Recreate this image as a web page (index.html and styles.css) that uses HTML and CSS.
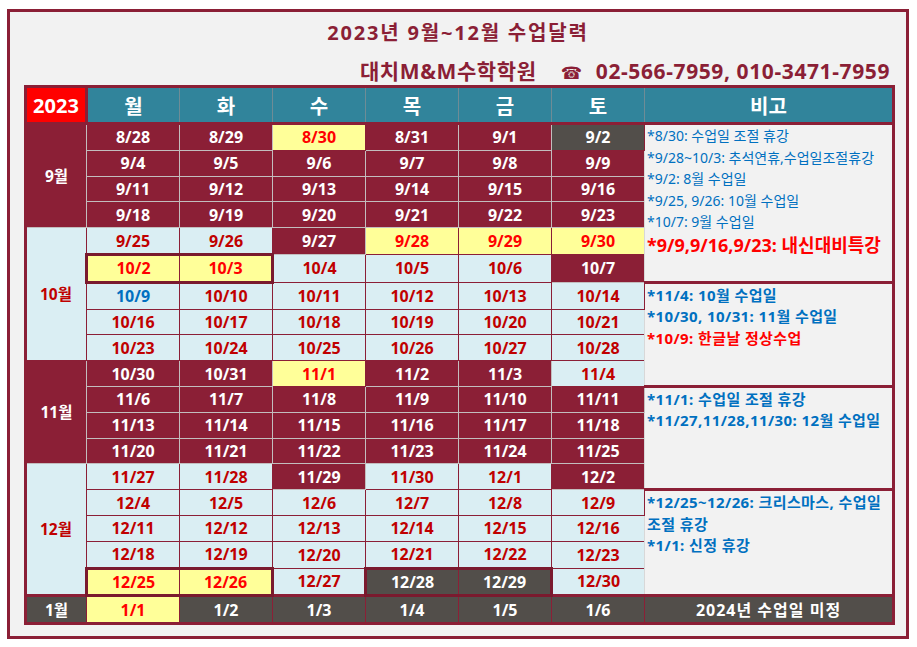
FILE: index.html
```html
<!DOCTYPE html>
<html lang="ko">
<head>
<meta charset="utf-8">
<title>2023년 9월~12월 수업달력</title>
<link rel="stylesheet" href="styles.css">
</head>
<body>
<div class="frame">
  <h1 class="title">2023년 9월~12월 수업달력</h1>
  <p class="contact"><span>대치M&amp;M수학학원</span><span class="phone">☎</span><span>02-566-7959, 010-3471-7959</span></p>
  <table class="cal">
    <colgroup>
      <col class="c-month"><col class="c-day"><col class="c-day"><col class="c-day"><col class="c-day"><col class="c-day"><col class="c-day"><col class="c-note">
    </colgroup>
    <thead>
      <tr class="head">
        <th class="year">2023</th><th>월</th><th>화</th><th>수</th><th>목</th><th>금</th><th>토</th><th>비고</th>
      </tr>
    </thead>
    <tbody>
      <tr>
        <td class="mon m" rowspan="4">9월</td>
        <td class="m">8/28</td><td class="m">8/29</td><td class="y">8/30</td><td class="m">8/31</td><td class="m">9/1</td><td class="g">9/2</td>
        <td class="note first" rowspan="6">
          <div class="ln">*8/30: 수업일 조절 휴강</div>
          <div class="ln">*9/28~10/3: 추석연휴,수업일조절휴강</div>
          <div class="ln">*9/2: 8월 수업일</div>
          <div class="ln">*9/25, 9/26: 10월 수업일</div>
          <div class="ln">*10/7: 9월 수업일</div>
          <div class="ln big">*9/9,9/16,9/23: 내신대비특강</div>
        </td>
      </tr>
      <tr><td class="m">9/4</td><td class="m">9/5</td><td class="m">9/6</td><td class="m">9/7</td><td class="m">9/8</td><td class="m">9/9</td></tr>
      <tr><td class="m">9/11</td><td class="m">9/12</td><td class="m">9/13</td><td class="m">9/14</td><td class="m">9/15</td><td class="m">9/16</td></tr>
      <tr><td class="m">9/18</td><td class="m">9/19</td><td class="m">9/20</td><td class="m">9/21</td><td class="m">9/22</td><td class="m">9/23</td></tr>
      <tr>
        <td class="mon b" rowspan="5">10월</td>
        <td class="b">9/25</td><td class="b">9/26</td><td class="m">9/27</td><td class="y">9/28</td><td class="y">9/29</td><td class="y">9/30</td>
      </tr>
      <tr><td class="y box-l">10/2</td><td class="y box-r">10/3</td><td class="b">10/4</td><td class="b">10/5</td><td class="b">10/6</td><td class="m">10/7</td></tr>
      <tr>
        <td class="b blue">10/9</td><td class="b">10/10</td><td class="b">10/11</td><td class="b">10/12</td><td class="b">10/13</td><td class="b">10/14</td>
        <td class="note bold" rowspan="4">
          <div class="ln">*11/4: 10월 수업일</div>
          <div class="ln">*10/30, 10/31: 11월 수업일</div>
          <div class="ln red">*10/9: 한글날 정상수업</div>
        </td>
      </tr>
      <tr><td class="b">10/16</td><td class="b">10/17</td><td class="b">10/18</td><td class="b">10/19</td><td class="b">10/20</td><td class="b">10/21</td></tr>
      <tr><td class="b">10/23</td><td class="b">10/24</td><td class="b">10/25</td><td class="b">10/26</td><td class="b">10/27</td><td class="b">10/28</td></tr>
      <tr>
        <td class="mon m" rowspan="4">11월</td>
        <td class="m">10/30</td><td class="m">10/31</td><td class="y">11/1</td><td class="m">11/2</td><td class="m">11/3</td><td class="b">11/4</td>
      </tr>
      <tr>
        <td class="m">11/6</td><td class="m">11/7</td><td class="m">11/8</td><td class="m">11/9</td><td class="m">11/10</td><td class="m">11/11</td>
        <td class="note bold" rowspan="4">
          <div class="ln">*11/1: 수업일 조절 휴강</div>
          <div class="ln">*11/27,11/28,11/30: 12월 수업일</div>
        </td>
      </tr>
      <tr><td class="m">11/13</td><td class="m">11/14</td><td class="m">11/15</td><td class="m">11/16</td><td class="m">11/17</td><td class="m">11/18</td></tr>
      <tr><td class="m">11/20</td><td class="m">11/21</td><td class="m">11/22</td><td class="m">11/23</td><td class="m">11/24</td><td class="m">11/25</td></tr>
      <tr>
        <td class="mon b" rowspan="5">12월</td>
        <td class="b">11/27</td><td class="b">11/28</td><td class="m">11/29</td><td class="b">11/30</td><td class="b">12/1</td><td class="m">12/2</td>
      </tr>
      <tr>
        <td class="b">12/4</td><td class="b">12/5</td><td class="b">12/6</td><td class="b">12/7</td><td class="b">12/8</td><td class="b">12/9</td>
        <td class="note bold" rowspan="4">
          <div class="ln">*12/25~12/26: 크리스마스, 수업일<br>조절 휴강</div>
          <div class="ln">*1/1: 신정 휴강</div>
        </td>
      </tr>
      <tr><td class="b">12/11</td><td class="b">12/12</td><td class="b">12/13</td><td class="b">12/14</td><td class="b">12/15</td><td class="b">12/16</td></tr>
      <tr><td class="b">12/18</td><td class="b">12/19</td><td class="b">12/20</td><td class="b">12/21</td><td class="b">12/22</td><td class="b">12/23</td></tr>
      <tr><td class="y box-l">12/25</td><td class="y box-r">12/26</td><td class="b">12/27</td><td class="g box-l">12/28</td><td class="g box-r">12/29</td><td class="b">12/30</td></tr>
      <tr class="last">
        <td class="mon g">1월</td><td class="y">1/1</td><td class="g">1/2</td><td class="g">1/3</td><td class="g">1/4</td><td class="g">1/5</td><td class="g">1/6</td><td class="g plan">2024년 수업일 미정</td>
      </tr>
    </tbody>
  </table>
</div>
</body>
</html>
```

FILE: styles.css
```css
html, body {
  margin: 0;
  padding: 0;
  background: #ffffff;
}

body {
  font-family: "Noto Sans", "Noto Sans CJK KR", sans-serif;
}

.frame {
  box-sizing: border-box;
  width: 902px;
  height: 630px;
  margin: 9px 0 0 7px;
  border: 3px solid #8b1f36;
  background: #f2f2f2;
  padding: 8px 0 0 14px;
}

.title {
  margin: 0;
  font-size: 20px;
  line-height: 26px;
  font-weight: 700;
  letter-spacing: 1.8px;
  color: #8b1f36;
  text-align: center;
  padding-right: 14px;
}

.contact {
  margin: 12px 0 0 0;
  font-size: 21px;
  line-height: 26px;
  font-weight: 700;
  letter-spacing: 0.6px;
  color: #8b1f36;
  text-align: right;
  padding-right: 16px;
}

.contact .phone {
  display: inline-block;
  margin: 0 14px 0 24px;
  font-family: "DejaVu Sans", sans-serif;
  font-weight: 400;
  font-size: 17px;
  letter-spacing: 0;
}

.cal {
  border-collapse: collapse;
  table-layout: fixed;
  width: 868px;
  margin-top: -1px;
  border: 3px solid #8b1f36;
  text-align: center;
}

.c-month { width: 61px; }
.c-day { width: 93px; }
.c-note { width: 249px; }

.head th {
  height: 34px;
  padding: 0;
  background: #31849b;
  color: #ffffff;
  font-size: 20px;
  font-weight: 700;
  border: 1px solid #6e8c96;
  border-bottom: 3px solid #8b1f36;
}

.head th.year {
  background: #ff0000;
  border: 3px solid #8b1f36;
}

.cal td {
  height: 24.8px;
  padding: 0;
  font-size: 16px;
  font-weight: 700;
  line-height: 18px;
  border: 1px solid #8b1f36;
}

.cal td.m {
  background: #8b1f36;
  color: #ffffff;
  border-color: #c3bdbe;
}

.cal td.b {
  background: #daeef3;
  color: #c00000;
}

.cal td.y {
  background: #ffff99;
  color: #ff0000;
}

.cal td.g {
  background: #524e4a;
  color: #ffffff;
}

.cal td.blue {
  color: #0070c0;
}

.cal td.mon {
  font-size: 15.5px;
}

.cal td.box-l {
  border-top: 3px solid #7a1a2e;
  border-bottom: 3px solid #7a1a2e;
  border-left: 3px solid #7a1a2e;
}

.cal td.box-r {
  border-top: 3px solid #7a1a2e;
  border-bottom: 3px solid #7a1a2e;
  border-right: 3px solid #7a1a2e;
}

.cal tr.last td {
  border-top: 3px solid #8b1f36;
}

.cal td.note {
  background: #f2f2f2;
  text-align: left;
  vertical-align: top;
  padding: 0 0 0 2px;
  color: #0070c0;
  font-size: 14px;
  font-weight: 400;
  border: 3px solid #8b1f36;
  border-left: 1px solid #d8d8d8;
}

.note .ln {
  line-height: 21.5px;
  white-space: nowrap;
}

.cal td.note.bold {
  font-size: 15px;
  letter-spacing: 0.4px;
  font-weight: 700;
  padding-top: 1px;
}

.cal td.note .big {
  color: #ff0000;
  font-size: 18px;
  font-weight: 700;
  line-height: 25px;
}

.cal td.note .red {
  color: #ff0000;
}

.cal td.plan {
  font-size: 16px;
  letter-spacing: 1px;
}
```
